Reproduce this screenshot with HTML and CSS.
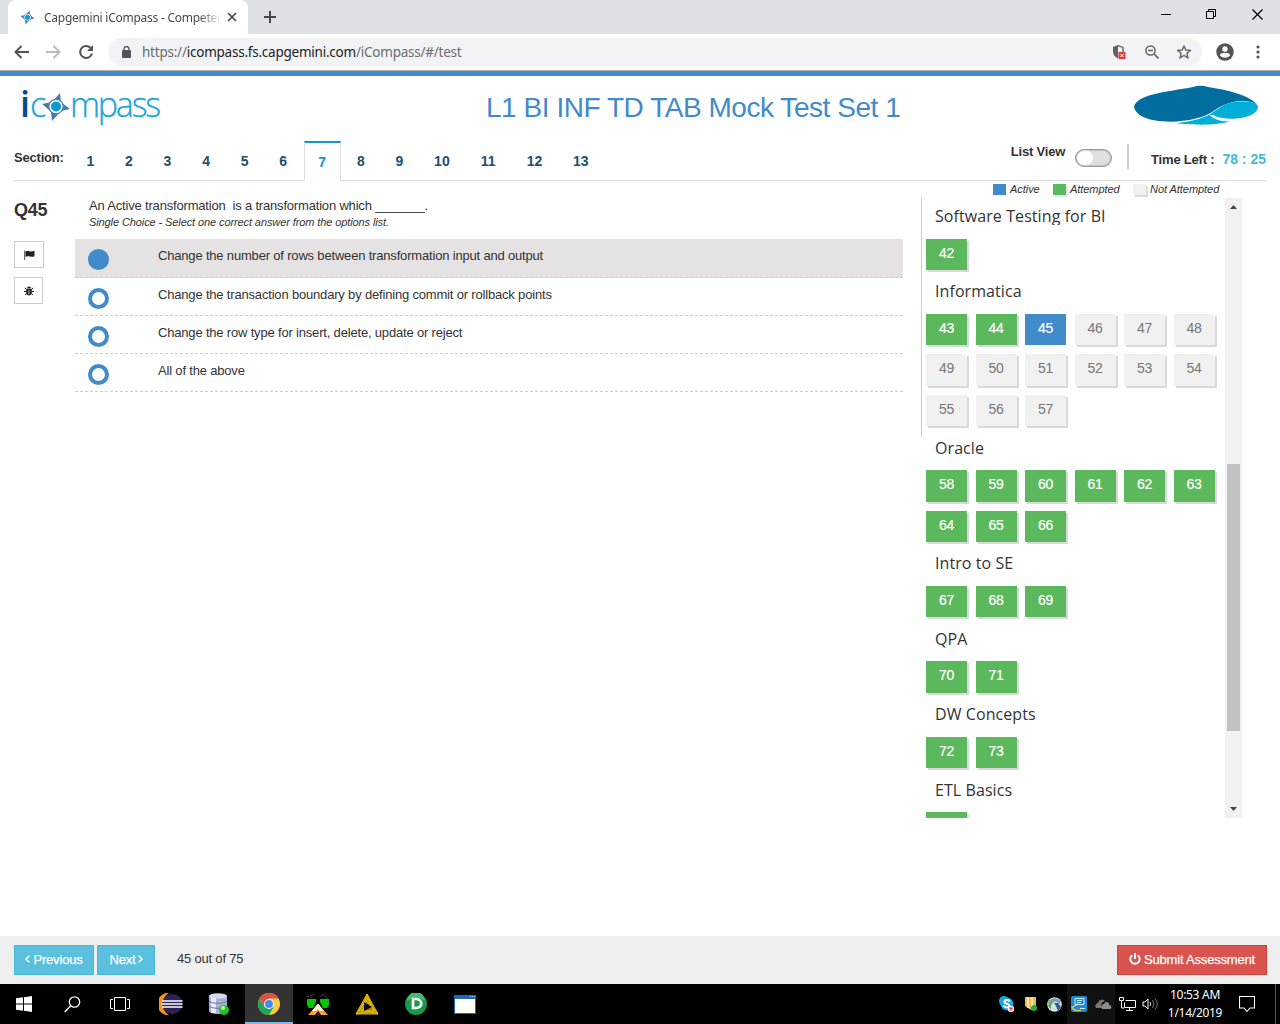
FILE: index.html
```html
<!DOCTYPE html>
<html lang="en">
<head>
<meta charset="utf-8">
<title>Capgemini iCompass</title>
<link rel="stylesheet" href="styles.css">
</head>
<body>
<svg class="defs" width="0" height="0">
  <defs>
    <symbol id="compass" viewBox="0 0 28 30">
      <path d="M18 1l1 9L28 17l-9 2L10 29l-1-9.500L0 12l10-2z" fill="#4a78b0"/>
      <circle cx="14" cy="14.500" r="7.200" fill="#fff" stroke="#4a80b8" stroke-width="1.300"/>
      <circle cx="14" cy="14.500" r="5" fill="#0a9cd0"/>
    </symbol>
  </defs>
</svg>

<div class="tabstrip">
  <div class="tab">
    <svg class="tab-icon" width="15" height="15"><use href="#compass"/></svg>
    <span class="tab-title">Capgemini iCompass - Competency</span>
    <svg width="10" height="10" viewBox="0 0 10 10"><path d="M1 1l8 8M9 1L1 9" stroke="#45494d" stroke-width="1.7"/></svg>
  </div>
  <svg class="newtab" width="12" height="12" viewBox="0 0 12 12"><path d="M6 0v12M0 6h12" stroke="#45494d" stroke-width="2"/></svg>
  <div class="winctl">
    <svg width="10" height="11" viewBox="0 0 10 11"><path d="M0 5.5h10" stroke="#000"/></svg>
    <svg width="11" height="11" viewBox="0 0 11 11"><path d="M.5 2.5h7v7h-7zM2.500 2.500v-2h7v7h-2" fill="none" stroke="#000"/></svg>
    <svg width="11" height="11" viewBox="0 0 11 11"><path d="M.5.5l10 10M10.500.5l-10 10" stroke="#000" stroke-width="1.2"/></svg>
  </div>
</div>

<div class="toolbar">
  <svg width="15" height="14" viewBox="0 0 15 14"><path d="M15 7H1.500M7.500 1L1.500 7l6 6" fill="none" stroke="#515458" stroke-width="2"/></svg>
  <svg width="15" height="14" viewBox="0 0 15 14"><path d="M0 7h13.500M7.500 1l6 6-6 6" fill="none" stroke="#b9bbbe" stroke-width="2"/></svg>
  <svg width="16" height="16" viewBox="0 0 16 16"><path d="M12.500 3.800A6 6 0 1 0 14 9.500" fill="none" stroke="#515458" stroke-width="2.100"/><path d="M15 1v6H9z" fill="#515458"/></svg>
  <div class="omnibox">
    <svg width="9" height="12" viewBox="0 0 9 12"><rect y="4" width="9" height="8" rx="1" fill="#515458"/><path d="M2 5V3a2.500 2.500 0 0 1 5 0v2" fill="none" stroke="#515458" stroke-width="1.300"/></svg>
    <span class="url"><i>https://</i>icompass.fs.capgemini.com<i>/iCompass/#/test</i></span>
    <svg class="shield" width="15" height="16" viewBox="0 0 15 16"><path d="M6 1L1 3v4c0 4 2 6 5 7.500z" fill="#5f6368"/><path d="M6 1.600l5 1.800V8" fill="none" stroke="#5f6368" stroke-width="1.400"/><rect x="6.500" y="8" width="7" height="7" fill="#e0403a"/><path d="M8.500 10l3 3M11.500 10l-3 3" stroke="#fff"/></svg>
    <svg width="14" height="14" viewBox="0 0 14 14"><circle cx="5.500" cy="5.500" r="4.600" fill="none" stroke="#5f6368" stroke-width="1.500"/><path d="M3 5.500h5M9 9l4.500 4.500" stroke="#5f6368" stroke-width="1.600"/></svg>
    <svg width="14" height="14" viewBox="0 0 14 14"><path d="M7 1l1.800 4 4.500.4-3.400 3 1 4.500L7 10.500l-3.900 2.400 1-4.500-3.400-3L5.200 5z" fill="none" stroke="#5f6368" stroke-width="1.400"/></svg>
  </div>
  <svg width="18" height="18" viewBox="0 0 18 18"><circle cx="9" cy="9" r="8.700" fill="#515458"/><circle cx="9" cy="6" r="2.700" fill="#fff"/><path d="M3.800 12c1-3 9.400-3 10.400 0-2 3.600-8.400 3.600-10.400 0z" fill="#fff"/></svg>
  <svg class="dots" width="4" height="14" viewBox="0 0 4 14"><g fill="#515458"><circle cx="2" cy="2" r="1.600"/><circle cx="2" cy="7" r="1.600"/><circle cx="2" cy="12" r="1.600"/></g></svg>
</div>

<header class="header">
  <div class="logo">
    <span class="logo-i">i</span><span class="logo-t">c</span><svg width="28" height="30"><use href="#compass"/></svg><span class="logo-t">mpass</span>
  </div>
  <h1>L1 BI INF TD TAB Mock Test Set 1</h1>
  <svg class="brand" width="126" height="41" viewBox="0 0 126 41">
    <path d="M1 22C4 9 34 7 60 2Q67-.5 75 2C94 5 113 9 124 19C112 14 97 15 82 25C64 40 5 42 1 22z" fill="#006d9e"/>
    <path d="M76 30C90 20 96 16.500 107 16.500C117 16.500 124 17 125 22C124 34 93 37 80 30z" fill="#00aed8"/>
    <path d="M43 38C57 37 67 34 77 29.500C80 34 90 36 98 36C84 41 55 40 43 38z" fill="#00aed8"/>
    <path d="M76.500 29.500C81 35 92 36.500 98 36" fill="none" stroke="#fff" stroke-width="1"/>
  </svg>
</header>

<nav class="sections">
  <span class="label">Section:</span>
  <div class="nums">
    <a>1</a><a>2</a><a>3</a><a>4</a><a>5</a><a>6</a><a class="on">7</a><a>8</a><a>9</a><a class="w">10</a><a class="w">11</a><a class="w">12</a><a class="w">13</a>
  </div>
  <span class="lv">List View</span>
  <span class="toggle"></span>
  <span class="vr"></span>
  <span class="tl">Time Left :</span>
  <span class="clock">78 : 25</span>
</nav>

<main>
  <aside class="tools">
    <h2>Q45</h2>
    <button class="flag"><svg width="11" height="10" viewBox="0 0 11 10"><path d="M.7.500v9.500" stroke="#555"/><path d="M1.500 1.500C4-.2 6 2.600 10.500.8v5.400C7 8 5 5 1.500 6.800z" fill="#222"/></svg></button>
    <button class="bug"><svg width="10" height="10" viewBox="0 0 10 10"><path d="M3 2.500a2 2 0 0 1 4 0z" fill="#222"/><path d="M2.300 3h5.400v4C7.700 10.200 2.300 10.200 2.300 7z" fill="#222"/><path d="M.8 2l2 1.500M9.200 2l-2 1.500M0 5.500h10M1 9l2-1.800M9 9L7 7.200" stroke="#222"/><path d="M5 4v4.500" stroke="#fff" stroke-width=".7"/></svg></button>
  </aside>
  <section class="question">
    <p class="q">An Active transformation&nbsp; is a transformation which _______.</p>
    <p class="hint">Single Choice - Select one correct answer from the options list.</p>
    <div class="opt sel"><b></b><span>Change the number of rows between transformation input and output</span></div>
    <div class="opt"><b></b><span>Change the transaction boundary by defining commit or rollback points</span></div>
    <div class="opt"><b></b><span>Change the row type for insert, delete, update or reject</span></div>
    <div class="opt"><b></b><span>All of the above</span></div>
  </section>
  <section class="side">
    <div class="legend"><b class="active"></b><span class="l1">Active</span><b class="done"></b><span class="l2">Attempted</span><b class="none"></b><span class="l3">Not Attempted</span></div>
    <div class="panel">
      <div class="list">
        <h3 class="cut">Software Testing for BI</h3>
        <div class="tiles"><a class="g">42</a></div>
        <h3>Informatica</h3>
        <div class="tiles"><a class="g">43</a><a class="g">44</a><a class="a">45</a><a>46</a><a>47</a><a>48</a><a>49</a><a>50</a><a>51</a><a>52</a><a>53</a><a>54</a><a>55</a><a>56</a><a>57</a></div>
        <h3>Oracle</h3>
        <div class="tiles"><a class="g">58</a><a class="g">59</a><a class="g">60</a><a class="g">61</a><a class="g">62</a><a class="g">63</a><a class="g">64</a><a class="g">65</a><a class="g">66</a></div>
        <h3>Intro to SE</h3>
        <div class="tiles"><a class="g">67</a><a class="g">68</a><a class="g">69</a></div>
        <h3>QPA</h3>
        <div class="tiles"><a class="g">70</a><a class="g">71</a></div>
        <h3>DW Concepts</h3>
        <div class="tiles"><a class="g">72</a><a class="g">73</a></div>
        <h3>ETL Basics</h3>
        <div class="tiles"><a class="g"></a></div>
      </div>
      <div class="scroll">
        <svg width="7" height="4" viewBox="0 0 7 4"><path d="M0 4L3.500 0 7 4z" fill="#444"/></svg>
        <div class="thumb"></div>
        <svg width="7" height="4" viewBox="0 0 7 4"><path d="M0 0h7L3.500 4z" fill="#444"/></svg>
      </div>
    </div>
  </section>
</main>

<footer class="actions">
  <button class="btn prev"><svg width="5" height="8" viewBox="0 0 5 8"><path d="M4.200.8L1 4l3.200 3.200" fill="none" stroke="#fff" stroke-width="1.500"/></svg><span>Previous</span></button>
  <button class="btn next"><span>Next</span><svg width="5" height="8" viewBox="0 0 5 8"><path d="M.8.8L4 4 .8 7.200" fill="none" stroke="#fff" stroke-width="1.500"/></svg></button>
  <span class="count">45 out of 75</span>
  <button class="btn submit"><svg width="12" height="12" viewBox="0 0 12 12"><path d="M3.300 2.200a4.700 4.700 0 1 0 5.400 0M6 0v6" fill="none" stroke="#fff" stroke-width="1.900"/></svg><span>Submit Assessment</span></button>
</footer>

<div class="taskbar">
  <div class="cell"><svg width="16" height="16" viewBox="0 0 16 16"><path d="M0 2.300l7-1v6.200H0zM8 1.200L16 0v7.500H8zM0 8.500h7v6.200l-7-1zM8 8.500h8V16l-8-1.200z" fill="#fff"/></svg></div>
  <div class="cell"><svg width="17" height="17" viewBox="0 0 17 17"><circle cx="10.500" cy="6" r="5.200" fill="none" stroke="#fff" stroke-width="1.300"/><path d="M6.800 9.800L.7 16" stroke="#fff" stroke-width="1.400"/></svg></div>
  <div class="cell"><svg width="20" height="14" viewBox="0 0 20 14"><path d="M4.500.5h11v13h-11zM3 2.500H.5v9H3M17 2.500h2.500v9H17" fill="none" stroke="#fff"/></svg></div>
  <div class="cell gap"><svg width="24" height="22" viewBox="0 0 24 22"><path d="M9.500 0A11 11 0 0 0 9.500 22A13 13 0 0 1 9.500 0z" fill="#f7941e" stroke="#f7941e" stroke-width=".6"/><ellipse cx="13.500" cy="11" rx="10.300" ry="10" fill="#2c2255"/><path d="M3 8h20.500M2.500 11h21M3 14h20.500" stroke="#fff" stroke-width="1.500"/></svg></div>
  <div class="cell"><svg width="22" height="22" viewBox="0 0 22 22"><path d="M1 3v15c0 4 18 4 18 0V3z" fill="#a9b0d3"/><path d="M3 4v16h5V4z" fill="#e9ebfa"/><ellipse cx="10" cy="3" rx="9" ry="2.800" fill="#d5d9ef"/><path d="M1 8c2 3 16 3 18 0M1 13c2 3 16 3 18 0" fill="none" stroke="#6d75a0"/><circle cx="16" cy="17" r="5" fill="#23c423"/><circle cx="15" cy="15" r="2" fill="#b9f7a9"/></svg></div>
  <div class="cell run"><svg width="22" height="22" viewBox="0 0 22 22"><circle cx="11" cy="11" r="11" fill="#fbcb43"/><path d="M1.500 5.500A11 11 0 0 1 20.500 5.500H11L6.200 13.700z" fill="#dd5144"/><path d="M1.500 5.500A11 11 0 0 0 11 22L15.800 13.700H6.200z" fill="#1da462"/><circle cx="11" cy="11" r="5" fill="#fff"/><circle cx="11" cy="11" r="4" fill="#4688f1"/></svg></div>
  <div class="cell"><svg width="24" height="22" viewBox="0 0 24 22"><path d="M1 4l7-3M15 3l2.500-2L22 6" fill="none" stroke="#777" stroke-width=".8" stroke-dasharray="2 1"/><path d="M1 6h9v3L7 15H3L1 12zM14 6h9v6l-2 3h-4l-3-6z" fill="#00c800"/><path d="M2 22l9-10h2l9 10h-7l-3-4-3 4z" fill="#ff9c3c"/><path d="M6 18l5.500-7h1L18 18h-4l-2-2-2 2z" fill="#fff8d5"/></svg></div>
  <div class="cell"><svg width="24" height="22" viewBox="0 0 24 22"><path d="M12 1L23 21H1zM12 1l7 18M12 1L8 17M1 21L13 6M23 21L10 6M12 4l7 14H4zM1 21l18-3M23 21L5 16" fill="#a88a00" stroke="#e6bd00" stroke-width="1"/><path d="M9 9l8 5-8 4z"/></svg></div>
  <div class="cell"><svg width="22" height="22" viewBox="0 0 22 22"><circle cx="11" cy="11" r="11" fill="#149a49"/><path d="M2 8A9 9 0 0 1 20 8C15 4 7 4 2 8z" fill="#48bd6d"/><path d="M8 6h3c7 0 7 9 0 9H8z" fill="none" stroke="#fff" stroke-width="2.700"/></svg></div>
  <div class="cell"><svg width="22" height="19" viewBox="0 0 22 19"><path d="M0 0h22v19H0z" fill="#2368b8"/><path d="M1 4h20v14H1z" fill="#fffff5"/><path d="M16 1.500h5" stroke="#8cc6ff" stroke-dasharray="1 1"/></svg></div>
  <div class="tray">
    <svg width="16" height="17" viewBox="0 0 16 17"><circle cx="5" cy="5" r="5" fill="#16a9e2"/><circle cx="8" cy="8" r="6.500" fill="#16a9e2"/><path d="M11 5.500C9 3 5 4 5.500 6S11 8 10.500 10 6 12 4.500 9.500" fill="none" stroke="#fff" stroke-width="2"/><rect x="9" y="10" width="6" height="6" rx="2" fill="#fff"/><path d="M10.500 11.500l3 3M13.500 11.500l-3 3" stroke="#d22" stroke-width="1.300"/></svg>
    <svg width="14" height="16" viewBox="0 0 14 16"><path d="M1 1h11v10l-5 3-6-4z" fill="#e9bd58"/><path d="M4 1v11M8 1v12" stroke="#fff3c0" stroke-width="1.500"/><circle cx="10" cy="12" r="3" fill="#29ae42"/></svg>
    <svg class="globe" width="15" height="15" viewBox="0 0 15 15"><circle cx="7.500" cy="7.500" r="7.300" fill="#d4e0e6"/><path d="M1 6C3 0 11 0 14 5L12 7C9 3 5 4 3 8z" fill="#7d9fae"/><path d="M7 6l4 0 3 4-3 4-2-5z" fill="#2a5f92"/><path d="M1 9C2 5 5 3 8 4 4 6 4 9 4 12z" fill="#62a850"/></svg>
    <div class="dark">
      <svg width="16" height="16" viewBox="0 0 16 16"><rect width="16" height="16" rx="2" fill="#2089d6"/><path d="M4 2.500h9v6H4zM6 4.500h5M6 6.500h4M2 11l5-3M9 12.500h5" fill="none" stroke="#c5edff"/><path d="M1 10c0 4 4 5 9 4.500" fill="none" stroke="#d8bd54" stroke-width="1.500"/></svg>
      <svg width="17" height="11" viewBox="0 0 17 11"><path d="M1 9C-1 6 2 4 3 4 4 0 8 0 10 2 6 3 6 6 7 9z" fill="#777"/><path d="M7 10C5 7 8 5 9 5c2-4 6-1 5 1 3 0 3 4 1 4z" fill="#8b8b8b"/></svg>
    </div>
    <svg class="net" width="17" height="15" viewBox="0 0 17 15"><path d="M6.500 3.500h10v7h-11v-5M10.500 10.500v3M7 13.500h7M.5.500h4v3h-4zM2.500 4v7h3" fill="none" stroke="#fff"/></svg>
    <svg class="vol" width="17" height="14" viewBox="0 0 17 14"><path d="M1 5h2l3-3v10L3 9H1z" fill="none" stroke="#fff"/><path d="M8 5q1.500 2 0 4" fill="none" stroke="#ddd"/><path d="M10.500 3q3 4 0 8M13 1.500q4.500 5.500 0 11" fill="none" stroke="#777"/></svg>
    <div class="time"><span>10:53 AM</span><span>1/14/2019</span></div>
    <svg class="note" width="16" height="17" viewBox="0 0 16 17"><path d="M.5.5h15v11.500h-4.500L8 15.500 5 12H.5z" fill="none" stroke="#fff" stroke-width="1.100"/></svg>
  </div>
</div>
</body>
</html>
```
FILE: styles.css
```css
* { box-sizing: border-box; }
body { margin: 0; width: 1280px; height: 1024px; overflow: hidden; display: flex; flex-direction: column; background: #fff; color: #333; font-family: "Liberation Sans", Arial, sans-serif; }
svg { display: block; flex: none; }
.defs { position: absolute; }
h1, h2, h3, p { margin: 0; font-weight: normal; }
button { border: 0; padding: 0; border-radius: 0; font-family: inherit; }
span, a { white-space: nowrap; }

.tabstrip { height: 34px; flex: none; background: #dee1e6; display: flex; align-items: flex-start; padding-left: 8px; }
.tab { width: 240px; height: 34px; background: #fff; border-radius: 8px 8px 0 0; display: flex; align-items: center; padding: 0 11px 0 12px; }
.tab-icon { margin-right: 9px; }
.tab-title { width: 175px; margin-right: 8px; overflow: hidden; font: 12px "Noto Sans", sans-serif; letter-spacing: -.25px; color: #45494d; -webkit-mask-image: linear-gradient(90deg, #000 155px, transparent 178px); mask-image: linear-gradient(90deg, #000 155px, transparent 178px); }
.newtab { margin: 11px 0 0 16px; }
.winctl { margin: 9px 17px 0 auto; display: flex; gap: 35px; }

.toolbar { height: 42px; flex: none; display: flex; align-items: center; padding: 0 20px 2px 14px; border-bottom: 5px solid #428bca; box-shadow: inset 0 -1px #b3b0ad; }
.toolbar > svg { margin-right: 17px; }
.omnibox { width: 1096px; height: 28px; border-radius: 14px; background: #f1f3f4; margin-left: -3px; display: flex; align-items: center; padding: 0 11px 0 14px; }
.url { margin-left: 11px; font: 13.500px "Noto Sans", sans-serif; letter-spacing: -.23px; color: #202124; }
.url i { font-style: normal; color: #6a6e73; }
.omnibox .shield { margin-left: auto; }
.omnibox svg + svg { margin-left: 18px; }
.omnibox + svg { margin: 0 22px 0 14px; }
.toolbar > .dots { margin: 0; }

.header { height: 58px; flex: none; display: flex; align-items: flex-start; padding: 0 22px; }
.logo { width: 140px; height: 58px; display: flex; align-items: flex-start; line-height: 56px; font-family: "Open Sans", sans-serif; }
.logo-i { font-size: 36px; font-weight: 600; color: #004a8f; width: 10px; margin-left: -2px; }
.logo-t { font-size: 34px; font-weight: 300; letter-spacing: -2.200px; color: #1aa5d8; -webkit-text-stroke: .3px #1aa5d8; }
.logo svg { margin: 16px 0 0 -2px; }
.header h1 { margin-left: 324px; font-size: 28px; line-height: 32px; padding-top: 16px; color: #428bca; white-space: nowrap; letter-spacing: -.46px; }
.brand { margin: 9px -1px 0 auto; }

.sections { height: 47px; flex: none; margin: 0 14px; display: flex; align-items: flex-start; border-bottom: 1px solid #ddd; font-weight: bold; font-size: 13px; letter-spacing: -.2px; }
.label { width: 57px; padding-top: 16px; line-height: 15px; }
.nums { display: flex; margin-top: 7px; height: 40px; letter-spacing: 0; }
.nums a { width: 38.600px; text-align: center; font-size: 14px; line-height: 41px; color: #20506b; }
.nums .w { width: 46.300px; }
.nums .on { height: 40px; width: 37px; margin: 0 1px; border: 1px solid #ddd; border-bottom: 0; border-top: 2px solid #0a97d3; color: #0a97d3; background: #fff; line-height: 39px; }
.lv { margin-left: auto; padding-top: 10px; line-height: 15px; }
.toggle { margin: 15px 0 0 10px; width: 37px; height: 18px; border-radius: 9px; background: radial-gradient(circle at 9px 8px, #fff 7.500px, transparent 8px), #e0e0e0; border: 1px solid #999; box-shadow: inset 0 0 2px #888; }
.vr { margin: 10px 0 0 15px; width: 2px; height: 25px; background: #ccc; }
.tl { margin: 18px 0 0 22px; line-height: 15px; }
.clock { margin: 17px 0 0 8px; line-height: 16px; font-size: 14px; letter-spacing: 0; color: #46b8da; }

main { height: 755px; flex: none; display: flex; }
.tools { width: 75px; padding: 19px 0 0 14px; }
.tools h2 { font-size: 18px; line-height: 20px; font-weight: bold; letter-spacing: -.2px; }
.tools button { height: 27px; border: 1px solid #ccc; background: #fff; display: flex; align-items: center; justify-content: center; }
.flag { width: 30px; margin-top: 21px; }
.bug { width: 29px; margin-top: 9px; }
.question { width: 828px; }
.q { padding: 17px 0 0 14px; font-size: 13px; line-height: 15px; letter-spacing: -.18px; }
.hint { padding-left: 14px; padding-top: 1px; font-size: 11px; line-height: 17px; font-style: italic; letter-spacing: -.1px; margin-bottom: 8px; }
.opt { height: 38px; border-bottom: 1px dashed #ccc; display: flex; font-size: 13px; letter-spacing: -.18px; }
.opt.sel { height: 39px; background: #e4e2e3; }
.opt b { width: 21px; height: 21px; margin: 9.500px 0 0 13px; border: 4px solid #428bca; border-radius: 50%; }
.opt.sel b { background: #428bca; }
.opt span { margin-left: 49px; padding-top: 9px; line-height: 15px; }
.side { margin-left: 18px; width: 321px; }
.legend { height: 17px; padding: 3px 0 0 72px; display: flex; font-size: 11px; font-style: italic; line-height: 11px; letter-spacing: -.05px; }
.legend b { width: 13px; height: 11px; }
.legend .active { background: #428bca; }
.legend .done { background: #5cb85c; box-shadow: 2px 2px #d9e7f7; }
.legend .none { background: #f1f1f1; box-shadow: 2px 2px #ddd; }
.legend span { margin-left: 4px; }
.l1 { width: 43px; }
.l2 { width: 63px; }
.panel { height: 620px; display: flex; overflow: hidden; background: linear-gradient(#ccc, #ccc) 0 0 / 1px 239px no-repeat; }
.list { width: 304px; padding: 6px 0 0 5px; }
.list h3 { height: 20.750px; margin: 0 0 13.800px 9px; font: 16px/24px "Open Sans", sans-serif; letter-spacing: .08px; }
.list .tiles + h3 { padding-top: .4px; height: 21.150px; }
.list .cut { overflow: hidden; }
.tiles { display: grid; grid-template-columns: repeat(6, 41px); column-gap: 8.500px; }
.tiles a { height: 31.450px; margin-bottom: 9px; background: #f1f1f1; box-shadow: 2px 2px #d9d9d9; color: #777; text-align: center; font-size: 14px; line-height: 29px; letter-spacing: -.4px; }
.tiles .g { background: #5cb85c; color: #fff; -webkit-text-stroke: .2px #fff; }
.tiles .a { background: #428bca; color: #fff; box-shadow: none; -webkit-text-stroke: .2px #fff; }
.scroll { width: 17px; background: #f1f1f1; display: flex; flex-direction: column; align-items: center; padding: 7px 0; }
.thumb { width: 13px; height: 267px; margin: 255px 0 auto; background: #c1c1c1; }

.actions { height: 48px; flex: none; background: #efefef; padding: 9px 13px 0 14px; display: flex; align-items: flex-start; letter-spacing: -.2px; }
.btn { height: 30px; color: #fff; background: #5bc0de; border: 1px solid #46b8da; display: flex; align-items: center; justify-content: center; font-size: 13px; letter-spacing: -.18px; padding-bottom: 2px; -webkit-text-stroke: .25px #fff; }
.prev { width: 80px; gap: 3px; margin-right: 3px; }
.next { width: 58px; gap: 2px; }
.count { margin: 6px auto 0 22px; font-size: 13px; line-height: 16px; }
.submit { width: 150px; gap: 3px; background: #d9534f; border-color: #d43f3a; }

.taskbar { height: 40px; flex: none; background: #000; display: flex; }
.cell { width: 49px; display: flex; align-items: center; justify-content: center; }
.cell:nth-child(-n+3) { width: 48px; }
.gap { margin-left: 2px; }
.cell:nth-child(5) { width: 48px; margin-right: 2px; }
.run { width: 48px; background: #333; border-bottom: 2px solid #76b9ed; }
.run svg { margin-top: 2px; }
.tray { margin-left: auto; width: 281px; display: flex; align-items: center; }
.tray > svg { margin-right: 9px; }
.tray > .globe { margin-right: 5px; }
.dark { width: 48px; height: 40px; background: #111; display: flex; align-items: center; gap: 8px; padding-left: 4px; margin-right: 4px; }
.tray > .net { margin-right: 6px; }
.tray > .vol { margin-right: 1px; }
.time { width: 70px; margin-right: 9px; color: #fff; font: 12px/18px "Noto Sans", sans-serif; letter-spacing: -.3px; display: flex; flex-direction: column; align-items: center; }
.tray > .note { margin-right: 20px; }
.tray::after { content: ""; width: 1px; height: 40px; background: #555; }
```
